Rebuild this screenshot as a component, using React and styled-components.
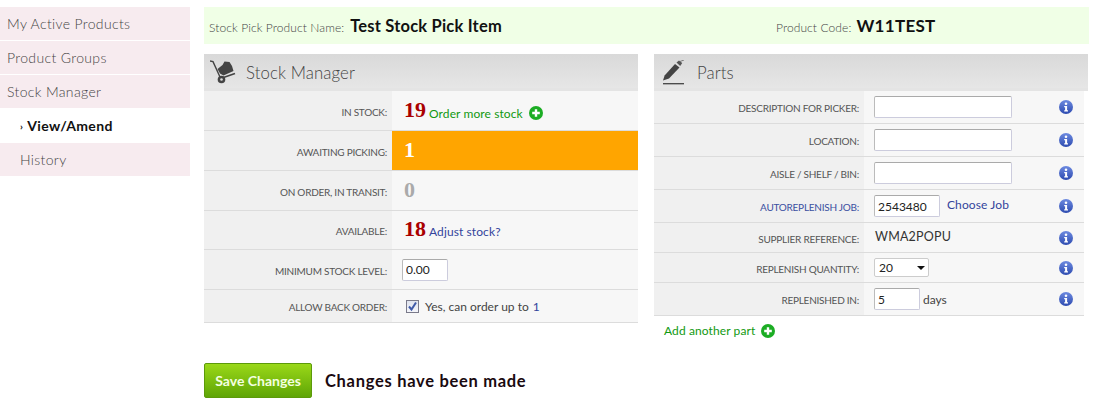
import React from "react";
import styled, { createGlobalStyle } from "styled-components";

const Global = createGlobalStyle`
  html, body { margin: 0; padding: 0; background: #fff; }
  body { font-family: Lato, "Open Sans", sans-serif; color: #444; }
  * { box-sizing: border-box; }
`;
const Page = styled.div`
  display: flex; align-items: flex-start; gap: 14px; padding-top: 7px; width: 1095px; height: 418px; overflow: hidden;
`;
const Side = styled.nav`width: 190px; flex: none; display: flex; flex-direction: column;`;
const NavItem = styled.div`
  height: ${p => p.$h || 33}px; margin-bottom: ${p => p.$mb ?? 1}px;
  display: flex; align-items: center;
  padding-left: ${p => (p.$sub ? 20 : 7)}px;
  background: ${p => (p.$active ? "#fff" : "#f7ebef")};
  color: ${p => (p.$active ? "#111" : "#444")};
  font-weight: ${p => (p.$active ? 700 : 300)};
  font-size: 14px; letter-spacing: .35px;
`;
const Chev = styled.span`font-size: 10px; margin-right: 4px; font-weight: 700; color: #111;`;
const Main = styled.main`width: 885px; flex: none;`;
const TopBar = styled.div`
  height: 37px; background: #f0ffe6; display: flex; align-items: center; padding: 0 0 0 5px;
  font-size: 12px; font-weight: 300; color: #444; letter-spacing: .1px;
`;
const TopLeft = styled.div`width: 567px; display: flex; align-items: baseline; gap: 6px;`;
const TopRight = styled.div`display: flex; align-items: baseline; gap: 5px;`;
const TopName = styled.b`font-size: 16.5px; color: #111; font-weight: 700; letter-spacing: .2px;`;
const TopCode = styled.b`font-size: 17px; color: #111; font-weight: 700; letter-spacing: .3px;`;
const Columns = styled.div`display: flex; gap: 16px; margin-top: 10px; align-items: flex-start;`;
const Panel = styled.section`width: ${p => p.$w}px; flex: none;`;
const PanelHead = styled.header`
  height: 37px; display: flex; align-items: center; gap: ${p => p.$gap}px; padding: 2px 0 0 ${p => p.$pad}px;
  background: linear-gradient(#d9d9d9, #e6e6e6);
  border-bottom: 3px solid #e4e4e4;
  font-size: 16.8px; font-weight: 300; color: #444; letter-spacing: .1px;
`;
const Rows = styled.div`width: ${p => p.$w}px;`;
const Row = styled.div`
  display: grid; grid-template-columns: ${p => p.$label}px 1fr;
  height: ${p => p.$h}px; border-bottom: 1px solid #dcdcdc;
`;
const Label = styled.div`
  background: #f0f0f0; display: flex; align-items: center; justify-content: flex-end;
  padding: 2px 5px 0 0; font-size: 10px; font-weight: 400; text-transform: uppercase; letter-spacing: -.25px;
  color: ${p => p.$link ? "#3a4fa0" : "#555"};
`;
const Value = styled.div`
  background: ${p => p.$bg || "#f7f7f7"}; display: flex; align-items: center;
  padding-left: 10px; font-size: 12px; color: #444; position: relative;
`;
const Num = styled.span`
  font-family: "Liberation Serif", serif; font-weight: 700; font-size: 22px; line-height: 1;
  color: ${p => p.$c}; margin: -2px 3px 0 2px;
`;
const GreenLink = styled.a`
  color: #119911; font-size: 12px; display: inline-flex; align-items: center; gap: 6px; letter-spacing: .1px;
  margin-top: ${p => p.$mt || 0}px;
`;
const BlueLink = styled.a`
  color: #33449c; font-size: 12px; letter-spacing: .1px;
  margin-left: ${p => p.$ml || 0}px; margin-top: ${p => p.$mt || 0}px;
`;
const TextIn = styled.input`
  width: ${p => p.$w}px; height: 22px; border: 1px solid #ccd; border-top-color: #aaa; border-left-color: #bbb;
  border-radius: 2px; background: #fff; padding: 0 3px; font-family: Lato, sans-serif; font-size: 12px; color: #222;
  outline: none;
`;
const CheckBox = styled.span`
  width: 13px; height: 13px; margin: 0 6px 0 4px; border: 1px solid #7a7a8a; background: linear-gradient(#dfe3ee, #f4f5fa);
  display: inline-flex; align-items: center; justify-content: center; flex: none;
`;
const SelectWrap = styled.div`position: relative; width: 55px; height: 19px;`;
const Sel = styled.select`
  appearance: none; width: 100%; height: 100%; border: 1px solid #ccc; border-radius: 2px; background: #fff;
  font-family: Lato, sans-serif; font-size: 12px; padding: 0 4px; color: #222; outline: none;
`;
const Arrow = styled.span`
  position: absolute; right: 4px; top: 8px; width: 0; height: 0;
  border-left: 4px solid transparent; border-right: 4px solid transparent; border-top: 4px solid #111;
`;
const InfoSlot = styled.span`position: absolute; right: 11px; top: 50%; margin-top: -7px; display: flex;`;
const Plain = styled.span`color: #333; margin: -3px 0 0 1px; font-size: 12.5px; letter-spacing: .2px;`;
const Suffix = styled.span`margin-left: 3px;`;
const AddPart = styled.div`padding: 3px 0 0 10px;`;
const Footer = styled.div`display: flex; align-items: center; gap: 13px; margin-top: 25px;`;
const Save = styled.button`
  width: 108px; height: 35px; border: 1px solid #5c9a0a; border-radius: 2px;
  background: linear-gradient(#9ad818, #5fa506); color: #f4ffe0; font-family: Lato, sans-serif; font-weight: 700; font-size: 14px; padding: 0;
`;
const Msg = styled.span`font-size: 16.5px; font-weight: 700; color: #1a0a10; letter-spacing: .7px;`;

const Plus = () => (
  <svg width="14" height="14" viewBox="0 0 14 14">
    <circle cx="7" cy="7" r="7" fill="#1cad24" />
    <path d="M7 3.2v7.6M3.2 7h7.6" stroke="#fff" strokeWidth="2.4" />
  </svg>
);
const Info = () => (
  <svg width="14" height="14" viewBox="0 0 14 14">
    <defs><linearGradient id="ig" x1="0" y1="0" x2="0" y2="1"><stop offset="0" stopColor="#6d8ae0" /><stop offset="1" stopColor="#2d4bb0" /></linearGradient></defs>
    <circle cx="7" cy="7" r="7" fill="url(#ig)" />
    <circle cx="7" cy="3.7" r="1.3" fill="#fff" />
    <path d="M5.2 6h2.9v4.2h.9v1.2H5.2v-1.2h.9V7.2h-.9z" fill="#fff" />
  </svg>
);
const Tick = () => (
  <svg width="11" height="11" viewBox="0 0 11 11">
    <path d="M2 5.5l2.5 3L9 1.5" fill="none" stroke="#3f5aa8" strokeWidth="2" />
  </svg>
);
const Truck = () => (
  <svg width="26" height="24" viewBox="0 0 26 24">
    <path d="M0 1l3 .6L10 17" fill="none" stroke="#444" strokeWidth="1.4" />
    <path d="M12 18l13-4.5" stroke="#444" strokeWidth="1.6" />
    <path d="M7.5 9l5-4 2-3.5 5 .5 2.5 4 1.5 5-10 4.5-3.5-2z" fill="#444" />
    <circle cx="11.5" cy="19.5" r="3.8" fill="#444" />
    <circle cx="11.5" cy="19.5" r="1.3" fill="#ddd" />
  </svg>
);
const Pen = () => (
  <svg width="24" height="25" viewBox="0 0 24 25">
    <path d="M1 20.5l1.6-5L13 4l4.5 3.4L7 18.5z" fill="#444" />
    <path d="M14.5 2.6L17 .4l3.2 2.6-2 3z" fill="#555" />
    <path d="M18 1.5L22 0" stroke="#666" strokeWidth="0.8" />
    <path d="M1 23.7h21" stroke="#444" strokeWidth="1.3" />
  </svg>
);

const PartRow = ({ label, h, link, children }) => (
  <Row $label={210} $h={h}>
    <Label $link={link}>{label}</Label>
    <Value>{children}<InfoSlot><Info /></InfoSlot></Value>
  </Row>
);

export default function App() {
  return (
    <Page>
      <Global />
      <Side>
        <NavItem>My Active Products</NavItem>
        <NavItem>Product Groups</NavItem>
        <NavItem $mb={0}>Stock Manager</NavItem>
        <NavItem $sub $active $h={35} $mb={0}><Chev>›</Chev>View/Amend</NavItem>
        <NavItem $sub>History</NavItem>
      </Side>
      <Main>
        <TopBar>
          <TopLeft>Stock Pick Product Name: <TopName>Test Stock Pick Item</TopName></TopLeft>
          <TopRight>Product Code: <TopCode>W11TEST</TopCode></TopRight>
        </TopBar>
        <Columns>
          <Panel $w={434}>
            <PanelHead $pad={6} $gap={10}><Truck />Stock Manager</PanelHead>
            <Row $label={188} $h={40}>
              <Label>In Stock:</Label>
              <Value><Num $c="#aa0000">19</Num><GreenLink $mt={5}>Order more stock <Plus /></GreenLink></Value>
            </Row>
            <Row $label={188} $h={40}>
              <Label>Awaiting Picking:</Label>
              <Value $bg="#ffa500"><Num $c="#fff">1</Num></Value>
            </Row>
            <Row $label={188} $h={40}>
              <Label>On Order, In Transit:</Label>
              <Value><Num $c="#aaa">0</Num></Value>
            </Row>
            <Row $label={188} $h={39}>
              <Label>Available:</Label>
              <Value><Num $c="#aa0000">18</Num><BlueLink $mt={3}>Adjust stock?</BlueLink></Value>
            </Row>
            <Row $label={188} $h={40}>
              <Label>Minimum Stock Level:</Label>
              <Value><TextIn $w={46} defaultValue="0.00" /></Value>
            </Row>
            <Row $label={188} $h={33}>
              <Label>Allow Back Order:</Label>
              <Value><CheckBox><Tick /></CheckBox>Yes, can order up to<BlueLink $ml={4}>1</BlueLink></Value>
            </Row>
          </Panel>
          <Panel $w={434}>
            <PanelHead $pad={8} $gap={11}><Pen />Parts</PanelHead>
            <Rows $w={430}>
              <PartRow label="Description for picker:" h={33}><TextIn $w={138} /></PartRow>
              <PartRow label="Location:" h={33}><TextIn $w={138} /></PartRow>
              <PartRow label="Aisle / Shelf / Bin:" h={33}><TextIn $w={138} /></PartRow>
              <PartRow label="Autoreplenish Job:" h={33} link><TextIn $w={66} defaultValue="2543480" /><BlueLink $ml={7} $mt={-3}>Choose Job</BlueLink></PartRow>
              <PartRow label="Supplier Reference:" h={30}><Plain>WMA2POPU</Plain></PartRow>
              <PartRow label="Replenish Quantity:" h={30}>
                <SelectWrap><Sel defaultValue="20"><option>20</option></Sel><Arrow /></SelectWrap>
              </PartRow>
              <PartRow label="Replenished In:" h={33}><TextIn $w={46} defaultValue="5" /><Suffix>days</Suffix></PartRow>
            </Rows>
            <AddPart><GreenLink>Add another part <Plus /></GreenLink></AddPart>
          </Panel>
        </Columns>
        <Footer>
          <Save>Save Changes</Save>
          <Msg>Changes have been made</Msg>
        </Footer>
      </Main>
    </Page>
  );
}
